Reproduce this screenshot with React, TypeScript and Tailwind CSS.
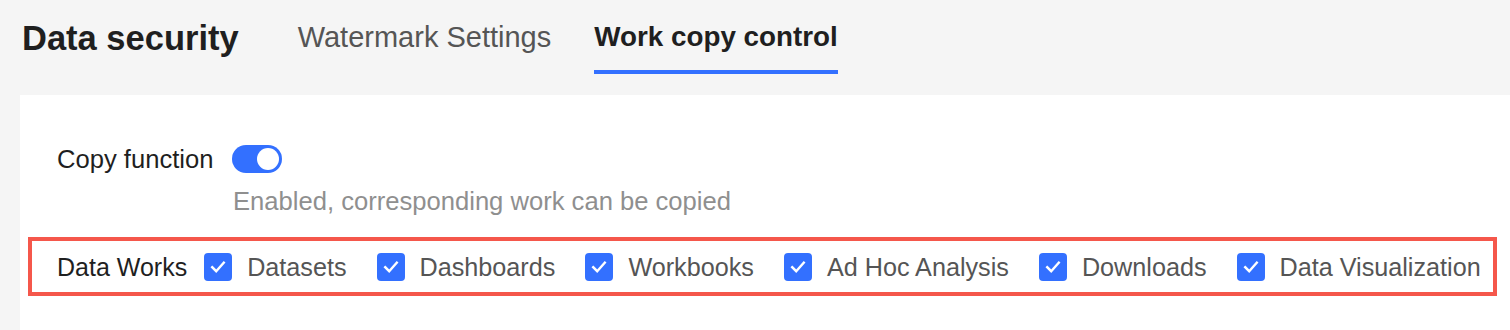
import React from "react";

const items = ["Datasets", "Dashboards", "Workbooks", "Ad Hoc Analysis", "Downloads", "Data Visualization"];

function Check() {
  return (
    <span className="flex h-[28px] w-[28px] shrink-0 items-center justify-center rounded-[4px] bg-[#3370ff]">
      <svg width="18" height="18" viewBox="0 0 18 18" fill="none">
        <path d="M3.2 9.2 L7.2 13.2 L14.8 4.6" stroke="white" strokeWidth="2.4" strokeLinecap="square" strokeLinejoin="miter" />
      </svg>
    </span>
  );
}

export default function App() {
  return (
    <div className="flex h-[330px] w-[1510px] flex-col overflow-hidden bg-[#f5f5f5] font-['Liberation_Sans',Arial,sans-serif]">
      <div className="flex h-[95px] shrink-0 items-start pl-[22px]">
        <div className="mt-[21px] text-[34.5px] font-bold leading-[35px] text-[#1f1f1f]">Data security</div>
        <div className="ml-[59px] flex gap-[43px]">
          <div className="mt-[23px] border-b-4 border-transparent pb-[19px] text-[29px] leading-[28px] text-[#555]">
            Watermark Settings
          </div>
          <div className="mt-[23px] border-b-4 border-[#3370ff] pb-[19px] text-[27.8px] font-bold leading-[28px] text-[#1f1f1f]">
            Work copy control
          </div>
        </div>
      </div>
      <div className="ml-[20px] flex-1 bg-white pl-[37px] pt-[50px]">
        <div className="flex items-center">
          <div className="w-[175px] text-[25.6px] leading-[28px] text-[#1f1f1f]">Copy function</div>
          <div className="relative h-[28px] w-[50px] rounded-full bg-[#3370ff]">
            <div className="absolute right-[3px] top-[3px] h-[22px] w-[22px] rounded-full bg-white" />
          </div>
        </div>
        <div className="mt-[14px] pl-[176px] text-[25.6px] leading-[28px] text-[#8f8f8f]">
          Enabled, corresponding work can be copied
        </div>
        <div className="-ml-[29px] mt-[22px] flex h-[59px] w-[1469px] items-center border-4 border-[#f5574b] pl-[25px]">
          <span className="mr-[17px] text-[25px] leading-[28px] text-[#1f1f1f]">Data Works</span>
          <div className="flex items-center gap-[30px]">
            {items.map((t) => (
              <div key={t} className="flex items-center gap-[15px]">
                <Check />
                <span className="text-[25.2px] leading-[28px] text-[#555]">{t}</span>
              </div>
            ))}
          </div>
        </div>
      </div>
    </div>
  );
}
